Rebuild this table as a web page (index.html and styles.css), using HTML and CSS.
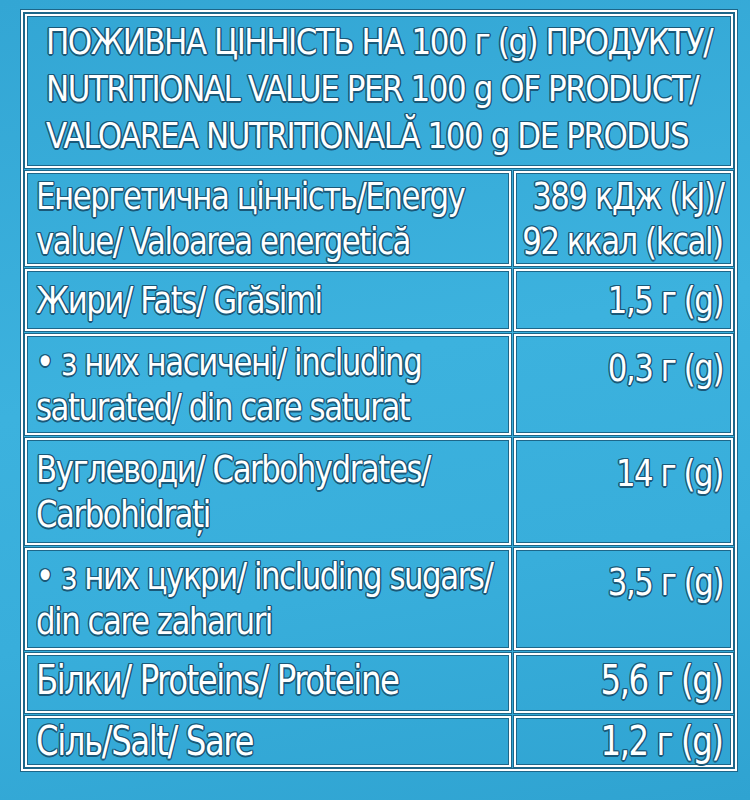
FILE: index.html
```html
<!DOCTYPE html>
<html lang="uk">
<head>
<meta charset="utf-8">
<link rel="stylesheet" href="styles.css">
</head>
<body>
<div class="pack">
  <div class="label">
    <div class="cell head">
      <span class="t">ПОЖИВНА ЦІННІСТЬ НА 100 г (g) ПРОДУКТУ/</span>
      <span class="t">NUTRITIONAL VALUE PER 100 g OF PRODUCT/</span>
      <span class="t">VALOAREA NUTRITIONALĂ 100 g DE PRODUS</span>
    </div>
    <div class="row r1">
      <div class="cell name"><span class="t">Енергетична цінність/Energy</span><span class="t">value/ Valoarea energetică</span></div>
      <div class="cell val"><span class="t">389 кДж (kJ)/</span><span class="t">92 ккал (kcal)</span></div>
    </div>
    <div class="row r2">
      <div class="cell name"><span class="t">Жири/ Fats/ Grăsimi</span></div>
      <div class="cell val"><span class="t">1,5 г (g)</span></div>
    </div>
    <div class="row r3">
      <div class="cell name"><span class="t">• з них насичені/ including</span><span class="t">saturated/ din care saturat</span></div>
      <div class="cell val lead"><span class="t">0,3 г (g)</span></div>
    </div>
    <div class="row r4">
      <div class="cell name"><span class="t">Вуглеводи/ Carbohydrates/</span><span class="t">Carbohidrați</span></div>
      <div class="cell val lead"><span class="t">14 г (g)</span></div>
    </div>
    <div class="row r5">
      <div class="cell name"><span class="t">• з них цукри/ including sugars/</span><span class="t">din care zaharuri</span></div>
      <div class="cell val lead"><span class="t">3,5 г (g)</span></div>
    </div>
    <div class="row r6 big">
      <div class="cell name"><span class="t">Білки/ Proteins/ Proteine</span></div>
      <div class="cell val"><span class="t">5,6 г (g)</span></div>
    </div>
    <div class="row r7 big">
      <div class="cell name"><span class="t">Сіль/Salt/ Sare</span></div>
      <div class="cell val"><span class="t">1,2 г (g)</span></div>
    </div>
  </div>
</div>
</body>
</html>
```

FILE: styles.css
```css
html, body {
  margin: 0;
  padding: 0;
}
body {
  width: 750px;
  height: 800px;
  overflow: hidden;
  font-family: "DejaVu Sans Condensed", "DejaVu Sans", sans-serif;
  color: #ffffff;
}
.pack {
  height: 800px;
  box-sizing: border-box;
  padding: 10px 0 0 21px;
  background: linear-gradient(170deg, #33a6d4 0%, #3cb2de 45%, #38aedb 70%, #2fa3d1 100%);
}
.label {
  width: 716px;
  box-sizing: border-box;
  border: 2px solid #ffffff;
  padding: 2px;
  display: flex;
  flex-direction: column;
  gap: 3px;
  box-shadow: 0 0 0 1px #1d6689, inset 0 0 0 1px #1d6689;
}
.cell {
  box-sizing: border-box;
  border: 2px solid #ffffff;
  box-shadow: 0 0 0 1px #1d6689, inset 0 0 0 1px #1d6689;
  display: flex;
  flex-direction: column;
  justify-content: center;
  white-space: nowrap;
}
.t {
  display: block;
  transform: scaleX(0.9);
  transform-origin: left center;
  text-shadow:
    1.5px 0 0 #1a5878, -1.5px 0 0 #1a5878, 0 1.5px 0 #1a5878, 0 -1.5px 0 #1a5878,
    1.1px 1.1px 0 #1a5878, -1.1px -1.1px 0 #1a5878, 1.1px -1.1px 0 #1a5878, -1.1px 1.1px 0 #1a5878;
}
.head {
  height: 154px;
  justify-content: flex-start;
  padding: 2px 0 0 19px;
  font-size: 36px;
  line-height: 47px;
  letter-spacing: -1.5px;
}
.head .t {
  transform: scaleX(0.955);
}
.row {
  display: flex;
  gap: 3px;
  font-size: 38px;
  line-height: 45px;
  letter-spacing: -1.6px;
}
.row.big {
  font-size: 40px;
}
.name {
  width: 486px;
  flex: none;
  padding-left: 9px;
}
.val {
  flex: 1;
  min-width: 0;
  align-items: flex-end;
  padding-right: 8px;
}
.val .t {
  transform-origin: right center;
}
.val.lead {
  justify-content: flex-start;
}
.r1 { height: 95px; }
.r2 { height: 62px; }
.r3 { height: 101px; }
.r4 { height: 107px; }
.r5 { height: 102px; }
.r6 { height: 60px; }
.r7 { height: 51px; }
.r3 .lead { padding-top: 10px; }
.r4 .lead { padding-top: 11px; }
.r5 .lead { padding-top: 10px; }
.r6 .name, .r6 .val { padding-bottom: 6px; }
```
